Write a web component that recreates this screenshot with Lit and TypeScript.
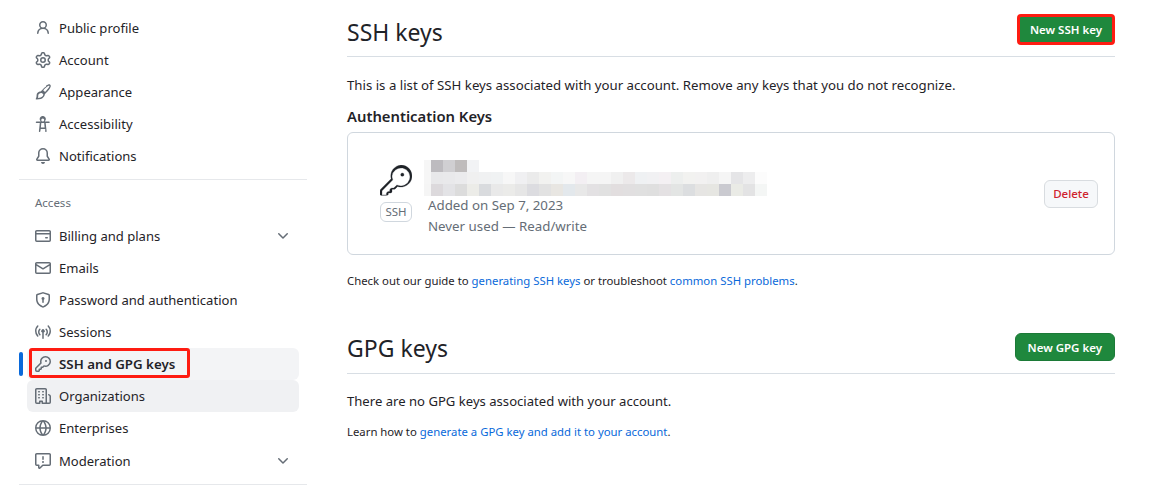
import { LitElement, html, css, svg } from "lit";
import { customElement } from "lit/decorators.js";

const ICONS: Record<string, any> = {
  person: svg`<path d="M10.561 8.073a6.005 6.005 0 0 1 3.432 5.142.75.75 0 1 1-1.498.07 4.5 4.5 0 0 0-8.99 0 .75.75 0 0 1-1.498-.07 6.004 6.004 0 0 1 3.431-5.142 3.999 3.999 0 1 1 5.123 0ZM10.5 5a2.5 2.5 0 1 0-5 0 2.5 2.5 0 0 0 5 0Z"/>`,
  gear: svg`<path d="M8 0a8.2 8.2 0 0 1 .701.031C9.444.095 9.99.645 10.16 1.29l.288 1.107c.018.066.079.158.212.224.231.114.454.243.668.386.123.082.233.09.299.071l1.103-.303c.644-.176 1.392.021 1.82.63.27.385.506.792.704 1.218.315.675.111 1.422-.364 1.891l-.814.806c-.049.048-.098.147-.088.294.016.257.016.515 0 .772-.01.147.038.246.088.294l.814.806c.475.469.679 1.216.364 1.891a7.977 7.977 0 0 1-.704 1.217c-.428.61-1.176.807-1.82.63l-1.102-.302c-.067-.019-.177-.011-.3.071a5.909 5.909 0 0 1-.668.386c-.133.066-.194.158-.211.224l-.29 1.106c-.168.646-.715 1.196-1.458 1.26a8.006 8.006 0 0 1-1.402 0c-.743-.064-1.289-.614-1.458-1.26l-.289-1.106c-.018-.066-.079-.158-.212-.224a5.738 5.738 0 0 1-.668-.386c-.123-.082-.233-.09-.299-.071l-1.103.303c-.644.176-1.392-.021-1.82-.63a8.12 8.12 0 0 1-.704-1.218c-.315-.675-.111-1.422.363-1.891l.815-.806c.05-.048.098-.147.088-.294a6.214 6.214 0 0 1 0-.772c.01-.147-.038-.246-.088-.294l-.815-.806C.635 6.045.431 5.298.746 4.623a7.92 7.92 0 0 1 .704-1.217c.428-.61 1.176-.807 1.82-.63l1.102.302c.067.019.177.011.3-.071.214-.143.437-.272.668-.386.133-.066.194-.158.211-.224l.29-1.106C6.009.645 6.556.095 7.299.03 7.53.01 7.764 0 8 0Zm-.571 1.525c-.036.003-.108.036-.137.146l-.289 1.105c-.147.561-.549.967-.998 1.189-.173.086-.34.183-.5.29-.417.278-.97.423-1.529.27l-1.103-.303c-.109-.03-.175.016-.195.045-.22.312-.412.644-.573.99-.014.031-.021.11.059.19l.815.806c.411.406.562.957.53 1.456a4.709 4.709 0 0 0 0 .582c.032.499-.119 1.05-.53 1.456l-.815.806c-.081.08-.073.159-.059.19.162.346.353.677.573.989.02.03.085.076.195.046l1.102-.303c.56-.153 1.113-.008 1.53.27.161.107.328.204.501.29.447.222.85.629.997 1.189l.289 1.105c.029.109.101.143.137.146a6.6 6.6 0 0 0 1.142 0c.036-.003.108-.036.137-.146l.289-1.105c.147-.561.549-.967.998-1.189.173-.086.34-.183.5-.29.417-.278.97-.423 1.529-.27l1.103.303c.109.029.175-.016.195-.045.22-.313.411-.644.573-.99.014-.031.021-.11-.059-.19l-.815-.806c-.411-.406-.562-.957-.53-1.456a4.709 4.709 0 0 0 0-.582c-.032-.499.119-1.05.53-1.456l.815-.806c.081-.08.073-.159.059-.19a6.464 6.464 0 0 0-.573-.989c-.02-.03-.085-.076-.195-.046l-1.102.303c-.56.153-1.113.008-1.53-.27a4.44 4.44 0 0 0-.501-.29c-.447-.222-.85-.629-.997-1.189l-.289-1.105c-.029-.11-.101-.143-.137-.146a6.6 6.6 0 0 0-1.142 0ZM11 8a3 3 0 1 1-6 0 3 3 0 0 1 6 0ZM9.5 8a1.5 1.5 0 1 0-3.001.001A1.5 1.5 0 0 0 9.5 8Z"/>`,
  brush: svg`<path d="M11.134 1.535c.7-.509 1.416-.942 2.076-1.155.649-.21 1.463-.267 2.069.34.603.601.568 1.411.368 2.07-.202.668-.624 1.39-1.125 2.096-1.011 1.424-2.496 2.987-3.775 4.249-.301.297-.601.636-.913 1.029a4.98 4.98 0 0 1-.164 1.156c-.246.92-.789 1.798-1.751 2.448C6.956 14.758 5.379 15.5 1.5 15.5a.75.75 0 0 1-.652-1.12c.534-.94.66-1.635.689-2.25.006-.125.01-.256.013-.392.014-.396.027-.848.124-1.265.127-.559.38-1.07.917-1.641.618-.655 1.37-1.073 2.13-1.283.306-.085.617-.127.927-.137.356-.339.704-.66 1.066-.96 1.213-1.287 2.893-2.898 4.42-3.917ZM5.88 9.1a2.5 2.5 0 0 0-.57.09c-.5.14-1 .42-1.42.86-.37.39-.49.68-.56 1-.07.29-.08.6-.09 1-.003.15-.008.31-.015.47-.02.44-.09.9-.26 1.42 2.38-.14 3.4-.67 4.04-1.1.63-.43.99-1 1.15-1.6.09-.32.12-.65.1-.95l-.06-.06-1.02-1.02a3.3 3.3 0 0 0-1.29-.11Zm6.14-6.35c-1.14.83-2.53 2.1-3.8 3.43l1.82 1.82c1.2-1.2 2.54-2.66 3.42-3.9.45-.64.77-1.21.91-1.66.14-.47.05-.57.01-.61-.04-.04-.16-.14-.6.01-.45.14-1.05.47-1.76.91Z"/>`,
  accessibility: svg`<path d="M9.923 5.302c.063.063.122.129.178.198H14A.75.75 0 0 1 14 7h-3.3l.578 5.163.362 2.997a.75.75 0 0 1-1.49.18L10.29 13H5.71l-.36 2.34a.75.75 0 0 1-1.49-.18l.362-2.997L4.8 7H1.5a.75.75 0 0 1 0-1.5h3.899a2.5 2.5 0 0 1 .178-.198 3.003 3.003 0 0 1-.327-.552A3 3 0 1 1 10.25 4.75a3.003 3.003 0 0 1-.327.552ZM7.75 2.5a1.5 1.5 0 1 0 0 3 1.5 1.5 0 0 0 0-3ZM6.31 7l-.42 4.5h3.72L9.19 7Z"/>`,
  bell: svg`<path d="M8 16a2 2 0 0 0 1.985-1.75c.017-.137-.097-.25-.235-.25h-3.5c-.138 0-.252.113-.235.25A2 2 0 0 0 8 16ZM3 5a5 5 0 0 1 10 0v2.947c0 .05.015.098.042.139l1.703 2.555A1.519 1.519 0 0 1 13.482 13H2.518a1.516 1.516 0 0 1-1.263-2.36l1.703-2.554A.255.255 0 0 0 3 7.947Zm5-3.5A3.5 3.5 0 0 0 4.5 5v2.947c0 .346-.102.683-.294.97l-1.703 2.556a.017.017 0 0 0-.003.01l.001.006c0 .002.002.004.004.006l.006.004.007.001h10.964l.007-.001.006-.004.004-.006.001-.007a.017.017 0 0 0-.003-.01l-1.703-2.554a1.745 1.745 0 0 1-.294-.97V5A3.5 3.5 0 0 0 8 1.5Z"/>`,
  card: svg`<path d="M10.75 9a.75.75 0 0 0 0 1.5h1.5a.75.75 0 0 0 0-1.5h-1.5Z"/><path d="M0 3.75C0 2.784.784 2 1.75 2h12.5c.966 0 1.75.784 1.75 1.75v8.5A1.75 1.75 0 0 1 14.25 14H1.75A1.75 1.75 0 0 1 0 12.25ZM14.5 6.5h-13v5.75c0 .138.112.25.25.25h12.5a.25.25 0 0 0 .25-.25Zm0-2.75a.25.25 0 0 0-.25-.25H1.75a.25.25 0 0 0-.25.25V5h13Z"/>`,
  mail: svg`<path d="M1.75 2h12.5c.966 0 1.75.784 1.75 1.75v8.5A1.75 1.75 0 0 1 14.25 14H1.75A1.75 1.75 0 0 1 0 12.25v-8.5C0 2.784.784 2 1.75 2ZM1.5 12.251c0 .138.112.25.25.25h12.5a.25.25 0 0 0 .25-.25V5.809L8.38 9.397a.75.75 0 0 1-.76 0L1.5 5.809v6.442Zm13-8.181v-.32a.25.25 0 0 0-.25-.25H1.75a.25.25 0 0 0-.25.25v.32L8 7.88Z"/>`,
  shield: svg`<path d="M8.533.133a1.75 1.75 0 0 0-1.066 0l-5.25 1.68A1.75 1.75 0 0 0 1 3.48V7c0 1.566.32 3.182 1.303 4.682.983 1.498 2.585 2.813 5.032 3.855a1.697 1.697 0 0 0 1.33 0c2.447-1.042 4.049-2.357 5.032-3.855C14.68 10.182 15 8.566 15 7V3.48a1.75 1.75 0 0 0-1.217-1.667Zm-.61 1.429a.25.25 0 0 1 .153 0l5.25 1.68a.25.25 0 0 1 .174.238V7c0 1.358-.275 2.666-1.057 3.86-.784 1.194-2.121 2.34-4.366 3.297a.196.196 0 0 1-.154 0c-2.245-.956-3.582-2.104-4.366-3.298C2.775 9.666 2.5 8.36 2.5 7V3.48a.25.25 0 0 1 .174-.238ZM9.5 6.5a1.5 1.5 0 0 1-.75 1.3v2.45a.75.75 0 0 1-1.5 0V7.8A1.5 1.5 0 1 1 9.5 6.5Z"/>`,
  broadcast: svg`<path d="M3.267 1.457c.3.286.312.76.026 1.06A6.475 6.475 0 0 0 1.5 7a6.472 6.472 0 0 0 1.793 4.483.75.75 0 0 1-1.086 1.034 8.89 8.89 0 0 1-.276-.304A7.971 7.971 0 0 1 0 7c0-2.139.84-4.083 2.207-5.517a.75.75 0 0 1 1.06-.026Zm9.466 0a.75.75 0 0 1 1.06.026A7.975 7.975 0 0 1 16 7c0 2.139-.84 4.083-2.207 5.517a.75.75 0 1 1-1.086-1.034A6.472 6.472 0 0 0 14.5 7a6.475 6.475 0 0 0-1.793-4.483.75.75 0 0 1 .026-1.06ZM8.75 8.582v5.668a.75.75 0 0 1-1.5 0V8.582a1.75 1.75 0 1 1 1.5 0ZM5.331 4.736a.75.75 0 0 1 .023 1.06A3.1 3.1 0 0 0 4.5 7.96a3.1 3.1 0 0 0 .854 2.164.75.75 0 0 1-1.083 1.038A4.6 4.6 0 0 1 3 7.96a4.6 4.6 0 0 1 1.271-3.2.75.75 0 0 1 1.06-.024Zm5.338 0a.75.75 0 0 1 1.06.023A4.6 4.6 0 0 1 13 7.96a4.6 4.6 0 0 1-1.271 3.202.75.75 0 0 1-1.083-1.038A3.1 3.1 0 0 0 11.5 7.96a3.1 3.1 0 0 0-.854-2.164.75.75 0 0 1 .023-1.06Z"/>`,
  key: svg`<path d="M10.5 0a5.499 5.499 0 1 1-1.288 10.848l-.932.932a.749.749 0 0 1-.53.22H7v.75a.749.749 0 0 1-.22.53l-.5.5a.749.749 0 0 1-.53.22H5v.75a.749.749 0 0 1-.22.53l-.5.5a.749.749 0 0 1-.53.22h-2A1.75 1.75 0 0 1 0 14.25v-2c0-.199.079-.389.22-.53l4.932-4.932A5.5 5.5 0 0 1 10.5 0Zm-4 5.5c-.001.431.069.86.205 1.269a.75.75 0 0 1-.181.768L1.5 12.56v1.69c0 .138.112.25.25.25h1.69l.06-.06v-1.19a.75.75 0 0 1 .75-.75h1.19l.06-.06v-1.19a.75.75 0 0 1 .75-.75h1.19l1.023-1.025a.75.75 0 0 1 .768-.18A4 4 0 1 0 6.5 5.5ZM11 6a1 1 0 1 1 0-2 1 1 0 0 1 0 2Z"/>`,
  key24: svg`<path d="M16.75 8.5a1.25 1.25 0 1 0 0-2.5 1.25 1.25 0 0 0 0 2.5Z"/><path d="M15.75 0a8.25 8.25 0 1 1-2.541 16.101l-1.636 1.636a1.744 1.744 0 0 1-1.237.513H9.25a.25.25 0 0 0-.25.25v1.448a.876.876 0 0 1-.256.619l-.214.213a.75.75 0 0 1-.545.22H6.5a.25.25 0 0 0-.25.25v.5a.75.75 0 0 1-.22.53l-.214.214a.875.875 0 0 1-.619.256H1.75A1.75 1.75 0 0 1 0 22.25v-2.836c0-.464.185-.91.513-1.237l7.853-7.853A8.25 8.25 0 0 1 15.75 0ZM9 8.25a6.733 6.733 0 0 0 .463 2.462.75.75 0 0 1-.168.8l-7.722 7.722a.25.25 0 0 0-.073.177v2.836c0 .138.112.25.25.25h2.836a.25.25 0 0 0 .177-.073l.032-.032v-.8c0-.966.784-1.75 1.75-1.75h.75v-.75c0-.966.784-1.75 1.75-1.75h1.086a.25.25 0 0 0 .177-.073l1.96-1.96a.75.75 0 0 1 .8-.168A6.75 6.75 0 1 0 9 8.25Z"/>`,
  org: svg`<path d="M1.75 16A1.75 1.75 0 0 1 0 14.25V1.75C0 .784.784 0 1.75 0h8.5C11.216 0 12 .784 12 1.75v12.5c0 .085-.006.168-.018.25h2.268a.25.25 0 0 0 .25-.25V8.285a.25.25 0 0 0-.111-.208l-1.055-.703a.749.749 0 1 1 .832-1.248l1.055.703c.487.325.779.871.779 1.456v5.965A1.75 1.75 0 0 1 14.25 16h-3.5a.766.766 0 0 1-.197-.026c-.099.017-.2.026-.303.026h-3a.75.75 0 0 1-.75-.75V14h-1v1.25a.75.75 0 0 1-.75.75Zm-.25-1.75c0 .138.112.25.25.25H4v-1.25a.75.75 0 0 1 .75-.75h2.5a.75.75 0 0 1 .75.75v1.25h2.25a.25.25 0 0 0 .25-.25V1.75a.25.25 0 0 0-.25-.25h-8.5a.25.25 0 0 0-.25.25ZM3.75 6h.5a.75.75 0 0 1 0 1.5h-.5a.75.75 0 0 1 0-1.5ZM3 3.75A.75.75 0 0 1 3.75 3h.5a.75.75 0 0 1 0 1.5h-.5A.75.75 0 0 1 3 3.75Zm4 3A.75.75 0 0 1 7.75 6h.5a.75.75 0 0 1 0 1.5h-.5A.75.75 0 0 1 7 6.75ZM7.75 3h.5a.75.75 0 0 1 0 1.5h-.5a.75.75 0 0 1 0-1.5ZM3 9.75A.75.75 0 0 1 3.75 9h.5a.75.75 0 0 1 0 1.5h-.5A.75.75 0 0 1 3 9.75ZM7.75 9h.5a.75.75 0 0 1 0 1.5h-.5a.75.75 0 0 1 0-1.5Z"/>`,
  globe: svg`<path d="M8 0a8 8 0 1 1 0 16A8 8 0 0 1 8 0ZM5.78 8.75a9.64 9.64 0 0 0 1.363 4.177c.255.426.542.832.857 1.215.245-.296.551-.705.857-1.215A9.64 9.64 0 0 0 10.22 8.75Zm4.44-1.5a9.64 9.64 0 0 0-1.363-4.177c-.307-.51-.612-.919-.857-1.215a9.927 9.927 0 0 0-.857 1.215A9.64 9.64 0 0 0 5.78 7.25Zm-5.944 1.5H1.543a6.507 6.507 0 0 0 4.666 5.5c-.123-.181-.24-.365-.352-.552-.715-1.192-1.437-2.874-1.581-4.948Zm-2.733-1.5h2.733c.144-2.074.866-3.756 1.58-4.948.12-.197.237-.381.353-.552a6.507 6.507 0 0 0-4.666 5.5Zm10.181 1.5c-.144 2.074-.866 3.756-1.58 4.948-.12.197-.237.381-.353.552a6.507 6.507 0 0 0 4.666-5.5Zm2.733-1.5a6.507 6.507 0 0 0-4.666-5.5c.123.181.24.365.353.552.714 1.192 1.436 2.874 1.58 4.948Z"/>`,
  report: svg`<path d="M0 1.75C0 .784.784 0 1.75 0h12.5C15.216 0 16 .784 16 1.75v9.5A1.75 1.75 0 0 1 14.25 13H8.06l-2.573 2.573A1.458 1.458 0 0 1 3 14.543V13H1.75A1.75 1.75 0 0 1 0 11.25Zm1.75-.25a.25.25 0 0 0-.25.25v9.5c0 .138.112.25.25.25h2a.75.75 0 0 1 .75.75v2.19l2.72-2.72a.749.749 0 0 1 .53-.22h6.5a.25.25 0 0 0 .25-.25v-9.5a.25.25 0 0 0-.25-.25Zm7 2.25v2.5a.75.75 0 0 1-1.5 0v-2.5a.75.75 0 0 1 1.5 0ZM9 9a1 1 0 1 1-2 0 1 1 0 0 1 2 0Z"/>`,
  chevron: svg`<path d="M12.78 5.22a.749.749 0 0 1 0 1.06l-4.25 4.25a.749.749 0 0 1-1.06 0L3.22 6.28a.749.749 0 1 1 1.06-1.06L8 8.939l3.72-3.719a.749.749 0 0 1 1.06 0Z"/>`,
};

const icon = (name: string, cls = "icon") =>
  html`<svg class=${cls} viewBox="0 0 16 16" aria-hidden="true">${ICONS[name]}</svg>`;

// Mosaic blocks that hide the key name and fingerprint: a 7px blurred edge, then 12px cells.
const ROW0 = ["#f6f6f6", "#bdbbbf", "#d0cfd2", "#bfbcbc", "#f2f3f5"];
const ROW1 = ["#f6f6f6","#e8e8ea","#e9e9eb","#ebebed","#f0f0f0","#f0f1f2","#f0f2f3","#f7f7f7","#f0f0f2","#ebebeb","#f2f2f0","#f3f5f5","#f7f7f7","#f3eff3","#f5f5f5","#f5f5f5","#f0f0f0","#ece9ea","#eff1f3","#f1f1f3","#f4f0f3","#edefee","#f2f2f0","#f2f1f1","#efefef","#f5f5f5","#e5e5e7","#ededee","#fcfcfc"];
const ROW2 = ["#f5f5f5","#dcd9dc","#e3e3e6","#dcdcdc","#ecece8","#d9dbde","#e9e9e9","#ebebe9","#e6e6e6","#dcdce0","#e2e2e2","#e8e6e2","#e3e8ec","#e8e8e8","#e3e1e3","#e1e1e1","#e2dedf","#e1dfe0","#e0e0e0","#dfdfdf","#e4e1e3","#e3e5e4","#dcdee0","#e6e5e3","#e6e6e2","#cacad0","#eaebe6","#e3e3e4","#f4f6f5"];

@customElement("app-root")
export class AppRoot extends LitElement {
  static styles = css`
    :host {
      display: block;
      height: 487px;
      overflow: hidden;
      background: #fff;
      color: #1f2328;
      font-family: "Noto Sans", "Open Sans", sans-serif;
      font-size: 13.22px;
    }
    .page { display: flex; padding-left: 19px; padding-top: 12px; }
    .side { width: 288px; flex: none; }
    .main { width: 768px; margin-left: 40px; }
    .icon { width: 16px; height: 16px; fill: #656d76; flex: none; }
    .item {
      position: relative;
      display: flex;
      align-items: center;
      gap: 8px;
      height: 32px;
      margin: 0 8px;
      padding: 0 8px;
      border-radius: 6px;
      box-sizing: border-box;
      font-size: 13.05px;
    }
    .item .label { flex: 1; line-height: 20px; }
    .chev { width: 16px; height: 16px; fill: #656d76; }
    .item.active { background: #f3f4f6; }
    .item.hover { background: #f0f1f3; }
    .item.active::before {
      content: "";
      position: absolute;
      left: -8px;
      top: 4px;
      width: 4px;
      height: 24px;
      border-radius: 6px;
      background: #0969da;
    }
    .item.active .label { font-weight: 600; font-size: 13.3px; }
    .mark {
      position: absolute;
      left: 2px;
      top: 0;
      width: 161px;
      height: 30px;
      box-sizing: border-box;
      border: 3px solid #fe1c12;
      border-radius: 3px;
    }
    .rule { height: 1px; background: #e6e8eb; margin: 7px 0 0; }
    .group { height: 40px; padding: 4px 16px 0; display: flex; align-items: center; font-size: 11.5px; color: #656d76; box-sizing: border-box; }
    .mod { margin-top: 1px; }

    .head { display: flex; align-items: flex-start; justify-content: space-between; height: 45px; border-bottom: 1px solid #d8dee4; box-sizing: border-box; }
    .head h2 { margin: 1px 0 0; font-size: 23px; font-weight: 400; line-height: 38px; }
    .btn {
      display: inline-flex;
      align-items: center;
      height: 28px;
      margin-top: 5px;
      padding: 0 12px;
      box-sizing: border-box;
      border-radius: 6px;
      background: #1f883d;
      color: #fff;
      font-size: 11.5px;
      font-weight: 600;
      border: 1px solid #1c7a37;
    }
    .btn.marked { height: 31px; width: 98px; margin-top: 2px; padding: 0; justify-content: center; border: 3px solid #fe1c12; border-radius: 4px; }
    .intro { margin: 18px 0 0; line-height: 20px; }
    .sub { margin: 10px 0 0; font-size: 14.8px; font-weight: 600; line-height: 22px; }
    .box {
      margin-top: 5px;
      height: 123px;
      box-sizing: border-box;
      border: 1px solid #d0d7de;
      border-radius: 6px;
      display: flex;
      align-items: center;
      padding: 0 16px;
    }
    .kind { display: flex; flex-direction: column; align-items: center; width: 32px; margin: 0 16px; }
    .bigkey { width: 32px; height: 32px; fill: #1f2328; stroke: #1f2328; stroke-width: 0.2; margin-bottom: 5px; }
    .ssh { border: 1px solid #d0d7de; border-radius: 6px; font-size: 11.5px; color: #656d76; height: 20px; line-height: 18px; padding: 0 4px; box-sizing: border-box; }
    .info { flex: 1; color: #656d76; line-height: 21px; padding-top: 10px; font-size: 13.3px; }
    .mosaic { display: grid; margin-left: -4px; margin-bottom: -1px; grid-template-columns: 7px repeat(28, 12px); grid-auto-rows: 12px; }
    .del {
      height: 28px;
      width: 54px;
      display: flex;
      align-items: center;
      justify-content: center;
      border: 1px solid #d8dce0;
      border-radius: 6px;
      background: #f6f8fa;
      color: #cf222e;
      font-size: 11.5px;
      font-weight: 500;
      box-sizing: border-box;
    }
    .note { font-size: 11.35px; margin: 17px 0 0; line-height: 18px; }
    a { color: #0969da; text-decoration: none; }
    .gpg { margin-top: 38px; height: 46px; }
    .none { margin: 17px 0 0; line-height: 20px; font-size: 13.1px; }
    .learn { font-size: 11.35px; margin: 12px 0 0; line-height: 18px; }
  `;

  private nav(name: string, label: string, cls = "", chevron = false) {
    return html`<div class="item ${cls}">
      ${icon(name)}<span class="label">${label}</span>
      ${chevron ? icon("chevron", "chev") : ""}
      ${cls.includes("active") ? html`<span class="mark"></span>` : ""}
    </div>`;
  }

  private cells(row: string[]) {
    return html`${row.map((c) => html`<span style="background:${c}"></span>`)}${Array.from(
      { length: 29 - row.length },
      () => html`<span></span>`
    )}`;
  }

  render() {
    return html`<div class="page">
      <nav class="side">
        ${this.nav("person", "Public profile")}
        ${this.nav("gear", "Account")}
        ${this.nav("brush", "Appearance")}
        ${this.nav("accessibility", "Accessibility")}
        ${this.nav("bell", "Notifications")}
        <div class="rule"></div>
        <div class="group">Access</div>
        ${this.nav("card", "Billing and plans", "", true)}
        ${this.nav("mail", "Emails")}
        ${this.nav("shield", "Password and authentication")}
        ${this.nav("broadcast", "Sessions")}
        ${this.nav("key", "SSH and GPG keys", "active")}
        ${this.nav("org", "Organizations", "hover")}
        ${this.nav("globe", "Enterprises")}
        ${this.nav("report", "Moderation", "mod", true)}
        <div class="rule"></div>
      </nav>
      <main class="main">
        <div class="head">
          <h2>SSH keys</h2>
          <span class="btn marked">New SSH key</span>
        </div>
        <p class="intro">This is a list of SSH keys associated with your account. Remove any keys that you do not recognize.</p>
        <h3 class="sub">Authentication Keys</h3>
        <div class="box">
          <div class="kind">
            <svg class="bigkey" viewBox="0 0 24 24" aria-hidden="true">${ICONS.key24}</svg>
            <span class="ssh">SSH</span>
          </div>
          <div class="info">
            <div class="mosaic">
              ${this.cells(ROW0)}${this.cells(ROW1)}${this.cells(ROW2)}
            </div>
            <div>Added on Sep 7, 2023</div>
            <div>Never used — Read/write</div>
          </div>
          <span class="del">Delete</span>
        </div>
        <p class="note">Check out our guide to <a>generating SSH keys</a> or troubleshoot <a>common SSH problems</a>.</p>
        <div class="head gpg">
          <h2>GPG keys</h2>
          <span class="btn">New GPG key</span>
        </div>
        <p class="none">There are no GPG keys associated with your account.</p>
        <p class="learn">Learn how to <a>generate a GPG key and add it to your account</a>.</p>
      </main>
    </div>`;
  }
}
